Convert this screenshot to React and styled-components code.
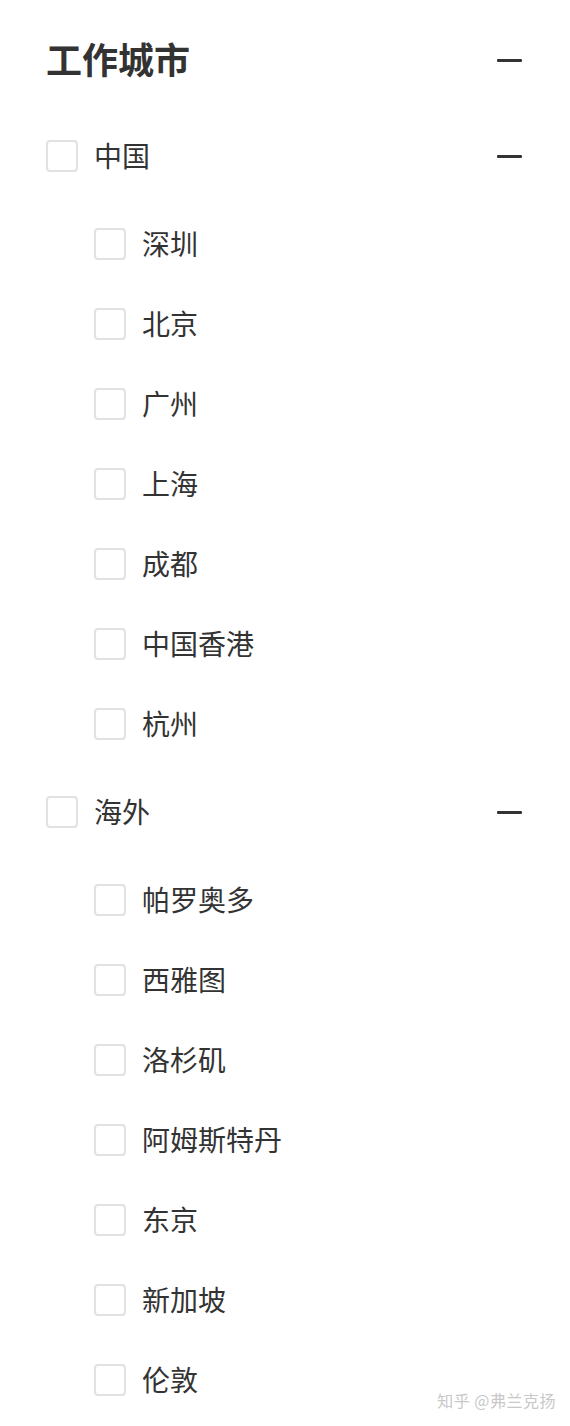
import React from "react";
import styled, { createGlobalStyle } from "styled-components";

const Global = createGlobalStyle`
  html, body { margin: 0; padding: 0; background: #fff; }
  body { font-family: "Noto Sans CJK SC", "Noto Sans", sans-serif; color: #333; }
`;

const Page = styled.div`
  position: relative;
  min-height: 1426px;
  padding: 0 48px 0 46px;
  box-sizing: border-box;
  overflow: hidden;
`;

const Header = styled.div`
  height: 120px;
  display: flex;
  align-items: center;
  justify-content: space-between;
`;

const Title = styled.h1`
  margin: 0;
  padding-bottom: 4px;
  font-size: 36px;
  font-weight: 700;
  line-height: 1;
  color: #333;
`;

const Minus = styled.span`
  display: block;
  width: 25px;
  height: 3px;
  background: #333;
  border-radius: 1px;
`;

const Group = styled.section`
  & + & { margin-top: 12px; }
`;

const Row = styled.label`
  display: flex;
  align-items: center;
  height: ${(p) => (p.$parent ? 72 : 80)}px;
  padding-left: ${(p) => (p.$parent ? 0 : 48)}px;
`;

const Box = styled.span`
  flex: none;
  width: 32px;
  height: 32px;
  box-sizing: border-box;
  border: 2px solid #e2e2e2;
  border-radius: 4px;
  background: #fff;
`;

const Label = styled.span`
  flex: 1;
  margin-left: 16px;
  padding-bottom: 2px;
  font-size: 28px;
  line-height: 1;
  color: #333;
`;

const Children = styled.div`
  padding-top: 12px;
`;

const Watermark = styled.div`
  position: absolute;
  right: 14px;
  bottom: 14px;
  font-size: 16px;
  color: #c8c8c8;
  text-shadow: 0 0 1px #fff;
  letter-spacing: 0.5px;
`;

const groups = [
  { name: "中国", items: ["深圳", "北京", "广州", "上海", "成都", "中国香港", "杭州"] },
  { name: "海外", items: ["帕罗奥多", "西雅图", "洛杉矶", "阿姆斯特丹", "东京", "新加坡", "伦敦"] },
];

export default function App() {
  return (
    <>
      <Global />
      <Page>
        <Header>
          <Title>工作城市</Title>
          <Minus />
        </Header>
        {groups.map((g) => (
          <Group key={g.name}>
            <Row $parent>
              <Box />
              <Label>{g.name}</Label>
              <Minus />
            </Row>
            <Children>
              {g.items.map((c) => (
                <Row key={c}>
                  <Box />
                  <Label>{c}</Label>
                </Row>
              ))}
            </Children>
          </Group>
        ))}
        <Watermark>知乎 @弗兰克扬</Watermark>
      </Page>
    </>
  );
}
